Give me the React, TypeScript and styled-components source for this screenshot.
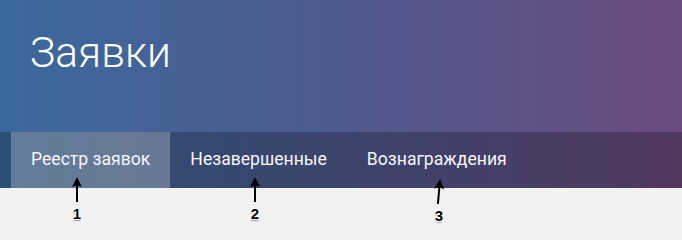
import React from "react";
import styled, { createGlobalStyle } from "styled-components";

const Global = createGlobalStyle`
  html, body { margin: 0; padding: 0; background: #f2f2f2; }
  body { font-family: Roboto, "Liberation Sans", sans-serif; }
`;

const Page = styled.div`
  position: relative;
  width: 682px;
  height: 234px;
  background: #f2f2f2;
  overflow: hidden;
`;

const Header = styled.header`
  background: linear-gradient(90deg, #3b699c 0%, #4f5a8e 50%, #6a4a7e 100%);
  display: flex;
  flex-direction: column;
`;

const Title = styled.h1`
  margin: 0;
  height: 132px;
  box-sizing: border-box;
  padding: 28px 0 0 30px;
  font-family: Roboto, "Liberation Sans", sans-serif;
  font-weight: 300;
  font-size: 42.5px;
  line-height: 50px;
  color: #ffffff;
`;

const TabBar = styled.nav`
  display: flex;
  height: 56px;
  padding-left: 11px;
  background: rgba(0, 0, 0, 0.24);
`;

const Tab = styled.div<{ $active?: boolean }>`
  display: flex;
  align-items: center;
  padding: 0 20px 2px;
  font-family: Roboto, "Liberation Sans", sans-serif;
  font-size: 17.6px;
  color: #f6f6fa;
  background: ${(p) => (p.$active ? "rgba(255,255,255,0.26)" : "transparent")};
`;

const Marker = styled.div<{ $x: number; $y: number }>`
  position: absolute;
  left: ${(p) => p.$x}px;
  top: ${(p) => p.$y}px;
  width: 24px;
  margin-left: -12px;
  display: flex;
  flex-direction: column;
  align-items: center;
`;

const Num = styled.span`
  font-family: "Liberation Sans", Arial, sans-serif;
  font-weight: 700;
  font-size: 15px;
  line-height: 15px;
  color: #000;
  margin-top: 4px;
  text-shadow: 1px 1px 0 #fff, -1px 1px 0 #fff, 1px -1px 0 #fff, -1px -1px 0 #fff,
    0 1.5px 1px #999;
`;

const Arrow = ({ tilt = 0 }: { tilt?: number }) => (
  <svg width="12" height="25" viewBox="0 0 12 25" style={{ transform: `rotate(${tilt}deg)` }}>
    <path d="M6 0 L11 10 L7 8.5 L7 25 L5 25 L5 8.5 L1 10 Z" fill="#000" />
  </svg>
);

const tabs = ["Реестр заявок", "Незавершенные", "Вознаграждения"];
const markers = [
  { x: 77, y: 177, n: "1", tilt: 0 },
  { x: 255, y: 177, n: "2", tilt: 0 },
  { x: 439, y: 179, n: "3", tilt: 5 },
];

export default function App() {
  return (
    <>
      <Global />
      <Page>
        <Header>
          <Title>Заявки</Title>
          <TabBar>
            {tabs.map((t, i) => (
              <Tab key={t} $active={i === 0}>
                {t}
              </Tab>
            ))}
          </TabBar>
        </Header>
        {markers.map((m) => (
          <Marker key={m.n} $x={m.x} $y={m.y}>
            <Arrow tilt={m.tilt} />
            <Num>{m.n}</Num>
          </Marker>
        ))}
      </Page>
    </>
  );
}
